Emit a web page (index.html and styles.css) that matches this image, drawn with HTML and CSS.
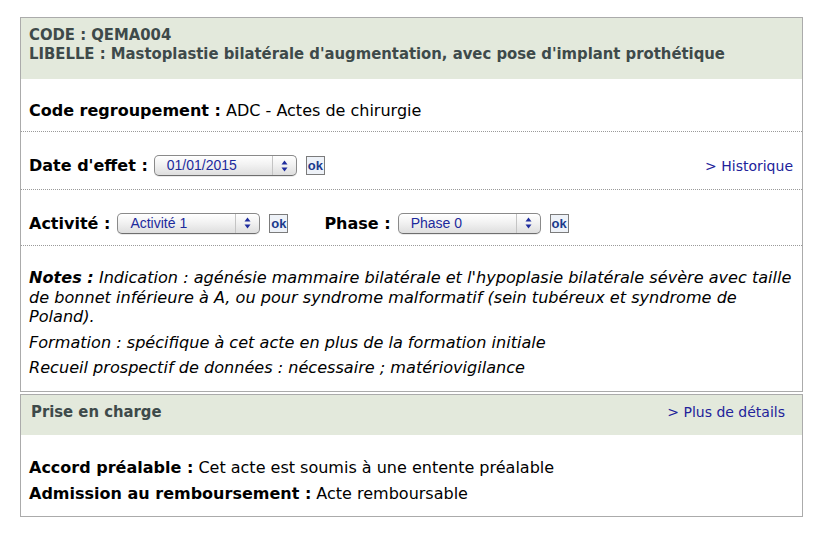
FILE: index.html
```html
<!DOCTYPE html>
<html lang="fr">
<head>
<meta charset="utf-8">
<title>QEMA004</title>
<link rel="stylesheet" href="styles.css">
</head>
<body>
<div class="page">
  <section class="card">
    <header class="card-head">
      <div class="head-line">CODE : QEMA004</div>
      <div class="head-line">LIBELLE : Mastoplastie bilatérale d'augmentation, avec pose d'implant prothétique</div>
    </header>
    <div class="row row-code">
      <b>Code regroupement :</b> ADC - Actes de chirurgie
    </div>
    <div class="row row-date">
      <div class="field">
        <b>Date d'effet :</b>
        <span class="select"><span class="select-value">01/01/2015</span><span class="select-arrows"><svg width="7" height="12" viewBox="0 0 7 12"><path d="M3.5 0.5 L6.5 4.5 L0.5 4.5 Z M3.5 11.5 L6.5 7.5 L0.5 7.5 Z" fill="#1f2d9e"/></svg></span></span>
        <span class="ok">ok</span>
      </div>
      <a class="link" href="#">&gt; Historique</a>
    </div>
    <div class="row row-act">
      <div class="field">
        <b>Activité :</b>
        <span class="select"><span class="select-value">Activité 1</span><span class="select-arrows"><svg width="7" height="12" viewBox="0 0 7 12"><path d="M3.5 0.5 L6.5 4.5 L0.5 4.5 Z M3.5 11.5 L6.5 7.5 L0.5 7.5 Z" fill="#1f2d9e"/></svg></span></span>
        <span class="ok">ok</span>
      </div>
      <div class="field field-phase">
        <b>Phase :</b>
        <span class="select"><span class="select-value">Phase 0</span><span class="select-arrows"><svg width="7" height="12" viewBox="0 0 7 12"><path d="M3.5 0.5 L6.5 4.5 L0.5 4.5 Z M3.5 11.5 L6.5 7.5 L0.5 7.5 Z" fill="#1f2d9e"/></svg></span></span>
        <span class="ok">ok</span>
      </div>
    </div>
    <div class="row row-notes">
      <p><b>Notes :</b> Indication : agénésie mammaire bilatérale et l'hypoplasie bilatérale sévère avec taille de bonnet inférieure à A, ou pour syndrome malformatif (sein tubéreux et syndrome de Poland).</p>
      <p>Formation : spécifique à cet acte en plus de la formation initiale</p>
      <p>Recueil prospectif de données : nécessaire ; matériovigilance</p>
    </div>
  </section>
  <section class="card card-prise">
    <header class="card-head head-prise">
      <div class="head-title">Prise en charge</div>
      <a class="link" href="#">&gt; Plus de détails</a>
    </header>
    <div class="prise-body">
      <div><b>Accord préalable :</b> Cet acte est soumis à une entente préalable</div>
      <div><b>Admission au remboursement :</b> Acte remboursable</div>
    </div>
  </section>
</div>
</body>
</html>
```
FILE: styles.css
```css
html, body {
  margin: 0;
  padding: 0;
  background: #fff;
}
body {
  font-family: "DejaVu Sans", Verdana, sans-serif;
  font-size: 16px;
  color: #000;
}
.page {
  padding: 17px 20px 0 20px;
  width: 783px;
}
.card {
  border: 1px solid #ababab;
}
.card-prise {
  margin-top: 2px;
}
.card-head {
  background: #e3e9dc;
  color: #3e4a4a;
  font-family: "DejaVu Sans Condensed", "DejaVu Sans", sans-serif;
  font-weight: bold;
  font-size: 16.5px;
  line-height: 19px;
  height: 61px;
  box-sizing: border-box;
  padding: 7px 8px 0 8px;
}
.row {
  border-bottom: 1px dotted #9a9a9a;
  padding: 0 4px 0 8px;
  box-sizing: border-box;
}
.row-code {
  height: 53px;
  padding-top: 22px;
  line-height: 19px;
}
.row-date, .row-act {
  display: flex;
  align-items: center;
}
.row-date {
  height: 58px;
  padding-top: 10px;
  padding-right: 9px;
  justify-content: space-between;
}
.row-act {
  height: 56px;
  padding-top: 11px;
}
.field {
  display: flex;
  align-items: center;
}
.field b {
  margin-right: 7px;
}
.row-date .field b {
  margin-right: 6px;
}
.field-phase {
  margin-left: 36px;
}
.select {
  display: inline-flex;
  align-items: stretch;
  width: 143px;
  height: 21px;
  box-sizing: border-box;
  border: 1px solid #8a8a8a;
  border-bottom-color: #6e6e6e;
  border-radius: 5px;
  background: linear-gradient(#ffffff, #f2f2f2 45%, #dedede);
  box-shadow: inset 0 1px 0 #fff, 0 1px 0 rgba(0,0,0,0.08);
  font-family: "Liberation Sans", Arial, sans-serif;
  font-size: 14px;
  color: #1c2a9c;
}
.select-value {
  flex: 1;
  padding-left: 12px;
  line-height: 19px;
}
.select-arrows {
  width: 23px;
  border-left: 1px solid #c4c4c4;
  display: flex;
  align-items: center;
  justify-content: center;
}
.ok {
  margin-left: 9px;
  width: 19px;
  height: 19px;
  box-sizing: border-box;
  border: 1px solid #7b7b7b;
  background: #eef2f8;
  color: #1b3a8c;
  font-family: "Liberation Sans", Arial, sans-serif;
  font-weight: bold;
  font-size: 13px;
  line-height: 17px;
  text-align: center;
}
.link {
  color: #22229a;
  text-decoration: none;
  font-size: 14px;
}
.row-notes {
  border-bottom: none;
  padding-top: 22px;
  padding-right: 2px;
  padding-bottom: 13px;
  font-style: italic;
  font-size: 16.1px;
  line-height: 19.5px;
}
.row-notes p {
  margin: 0 0 6px 0;
}
.row-notes p:last-child {
  margin-bottom: 0;
}
.head-prise {
  display: flex;
  justify-content: space-between;
  align-items: baseline;
  padding: 7px 17px 0 10px;
  height: 40px;
}
.head-title {
  font-size: 16.5px;
}
.head-prise .link {
  font-family: "DejaVu Sans", Verdana, sans-serif;
  font-weight: normal;
}
.prise-body {
  padding: 20px 8px 9px 8px;
  line-height: 26px;
}
```
